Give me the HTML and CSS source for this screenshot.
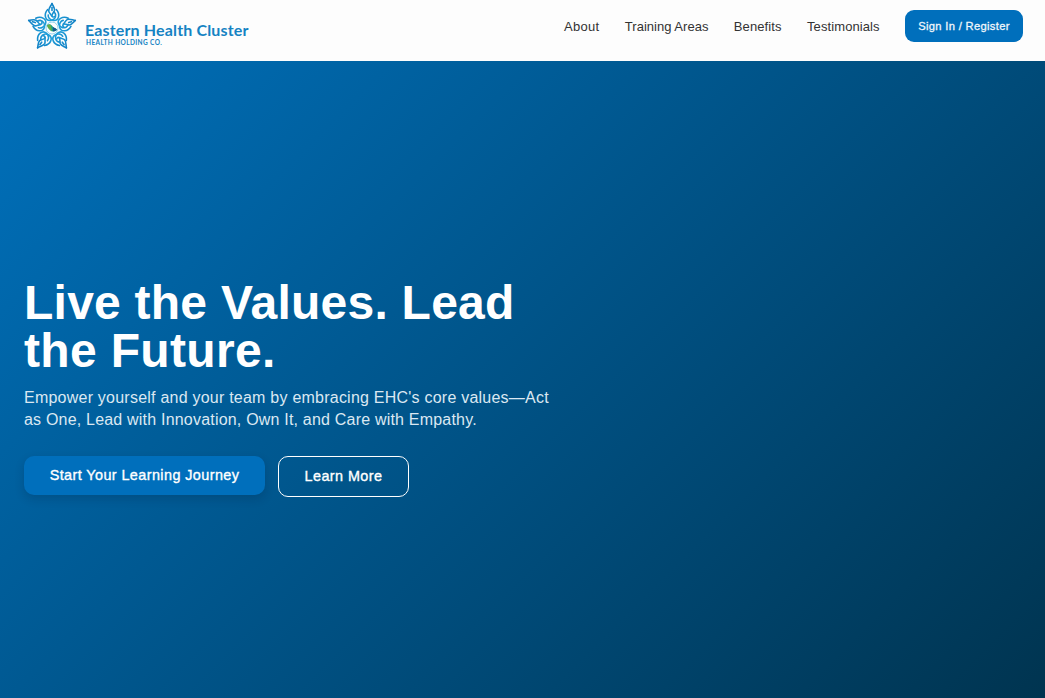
FILE: index.html
```html
<!DOCTYPE html>
<html lang="en">
<head>
<meta charset="utf-8">
<title>Eastern Health Cluster</title>
<link rel="stylesheet" href="styles.css">
</head>
<body>
<header class="header">
  <a class="brand">
    <svg class="brand-mark" viewBox="-26 -26 52 52">
      <defs>
        <linearGradient id="blue" x1="0" y1="-25" x2="0" y2="-6" gradientUnits="userSpaceOnUse">
          <stop offset="0" stop-color="#0f7fc4"/>
          <stop offset="1" stop-color="#20a0da"/>
        </linearGradient>
        <g id="petal" fill="none" stroke="url(#blue)" stroke-width="1.600" stroke-linecap="round" stroke-linejoin="round">
          <path d="M0-24.500C1-22 3-20 2.500-17.500C2-15.500 0-14.500 0-12.500C0-11 1.500-10.500 2.500-11.500"/>
          <path d="M0-24.500C-1-22-3.500-20-3.300-17C-3-15-1-14-.3-12"/>
          <path d="M-4.300-18.500C-8.500-14-7-7-1.500-7.500C2-8 4-10.500 3.600-13.500C3.400-14.500 2.800-15.300 2.300-15.800"/>
          <path d="M4.300-18.500C8.500-14 7-7 1.500-7.500C-2-8-4.200-10.500-3.800-13"/>
          <path d="M0-20.500V-17.500"/>
        </g>
      </defs>
      <use href="#petal"/>
      <use href="#petal" transform="rotate(72)"/>
      <use href="#petal" transform="rotate(144)"/>
      <use href="#petal" transform="rotate(216)"/>
      <use href="#petal" transform="rotate(288)"/>
      <circle r="6" fill="#fdfdfd" stroke="#45b5e2" stroke-width=".6"/>
      <path d="M-5-3C-2-5 0-3 1-1C2.500 0 4.500 .5 5 2C2 4 0 3.800-1.500 2.500C-2.500 1-4.500 0-5-3Z" fill="#169a86"/>
      <path d="M-5-3C-3-4-2-3.500-1-2.500L0 3.200C-2 2.500-4.500 0-5-3Z" fill="#65ae48"/>
      <path d="M1-1C2.500 0 4.500 .5 5 2C3 3.200 2 3.300 1 3.200Z" fill="#17558c"/>
    </svg>
    <span class="brand-text">
      <span class="brand-name">Eastern Health Cluster</span>
      <span class="brand-sub">HEALTH HOLDING CO.</span>
    </span>
  </a>
  <nav class="nav">
    <a class="nav-link about">About</a>
    <a class="nav-link training">Training Areas</a>
    <a class="nav-link benefits">Benefits</a>
    <a class="nav-link testimonials">Testimonials</a>
    <a class="sign-in"><span>Sign In / Register</span></a>
  </nav>
</header>
<main class="hero">
  <h1 class="title"><span class="title-a">Live the Values. Lead</span><br><span class="title-b">the Future.</span></h1>
  <p class="lead"><span class="lead-a">Empower yourself and your team by embracing EHC's core values—Act</span><br><span class="lead-b">as One, Lead with Innovation, Own It, and Care with Empathy.</span></p>
  <div class="actions">
    <a class="button primary"><span>Start Your Learning Journey</span></a>
    <a class="button outline"><span>Learn More</span></a>
  </div>
</main>
</body>
</html>
```
FILE: styles.css
```css
* { box-sizing: border-box; }
body {
  margin: 0;
  height: 698px;
  display: flex;
  flex-direction: column;
  overflow: hidden;
  font-family: "Liberation Sans", Arial, sans-serif;
}
.header {
  height: 61px;
  flex: none;
  display: flex;
  justify-content: space-between;
  align-items: flex-start;
  padding: 0 22px 0 26px;
  background: #fdfdfd;
}
.brand { display: flex; }
.brand-mark { width: 52px; height: 52px; margin-top: 2px; }
.brand-text {
  display: flex;
  flex-direction: column;
  margin: 21px 0 0 7px;
  color: #1583c3;
  font-family: Lato, sans-serif;
  white-space: nowrap;
}
.brand-name { font-size: 16px; line-height: 18px; font-weight: 700; letter-spacing: .15px; }
.brand-sub { font-size: 6.500px; line-height: 7px; font-weight: 700; margin-left: 1px; letter-spacing: .38px; }
.nav { display: flex; align-items: center; height: 32px; margin-top: 10px; }
.nav-link {
  font-size: 13px;
  line-height: 20px;
  padding-top: 2px;
  color: #333;
  white-space: nowrap;
  margin-right: 25.300px;
}
.about { letter-spacing: .3px; }
.training { letter-spacing: .02px; }
.benefits { letter-spacing: .12px; }
.testimonials { letter-spacing: .1px; }
.sign-in {
  width: 118px;
  height: 32px;
  display: flex;
  align-items: center;
  justify-content: center;
  border-radius: 9px;
  background: #006fbc;
  color: #f0f6fb;
  font-size: 11.200px;
  letter-spacing: .32px;
  white-space: nowrap;
  -webkit-text-stroke: .3px currentColor;
}
.hero {
  flex: 1;
  padding: 218px 24px 0;
  background: linear-gradient(135deg, #0070bb 0%, #003450 100%);
  color: #fff;
  white-space: nowrap;
}
.title { margin: 0; font-size: 48px; line-height: 48px; font-weight: 700; }
.title-a { letter-spacing: .24px; }
.title-b { letter-spacing: .34px; }
.lead { margin: 12px 0 0; font-size: 16px; line-height: 22px; color: #dbe8f2; }
.lead-a { letter-spacing: .23px; }
.lead-b { letter-spacing: .2px; }
.actions { display: flex; align-items: flex-start; gap: 13px; margin-top: 25px; }
.button {
  display: flex;
  align-items: center;
  justify-content: center;
  padding-bottom: 2px;
  border-radius: 10px;
  font-size: 14.400px;
  letter-spacing: .42px;
  -webkit-text-stroke: .35px currentColor;
}
.primary { width: 241px; height: 39px; background: #006fbc; box-shadow: 0 4px 10px rgba(0, 20, 50, .18); }
.outline { width: 131px; height: 41px; border: 1px solid #fff; }
```
